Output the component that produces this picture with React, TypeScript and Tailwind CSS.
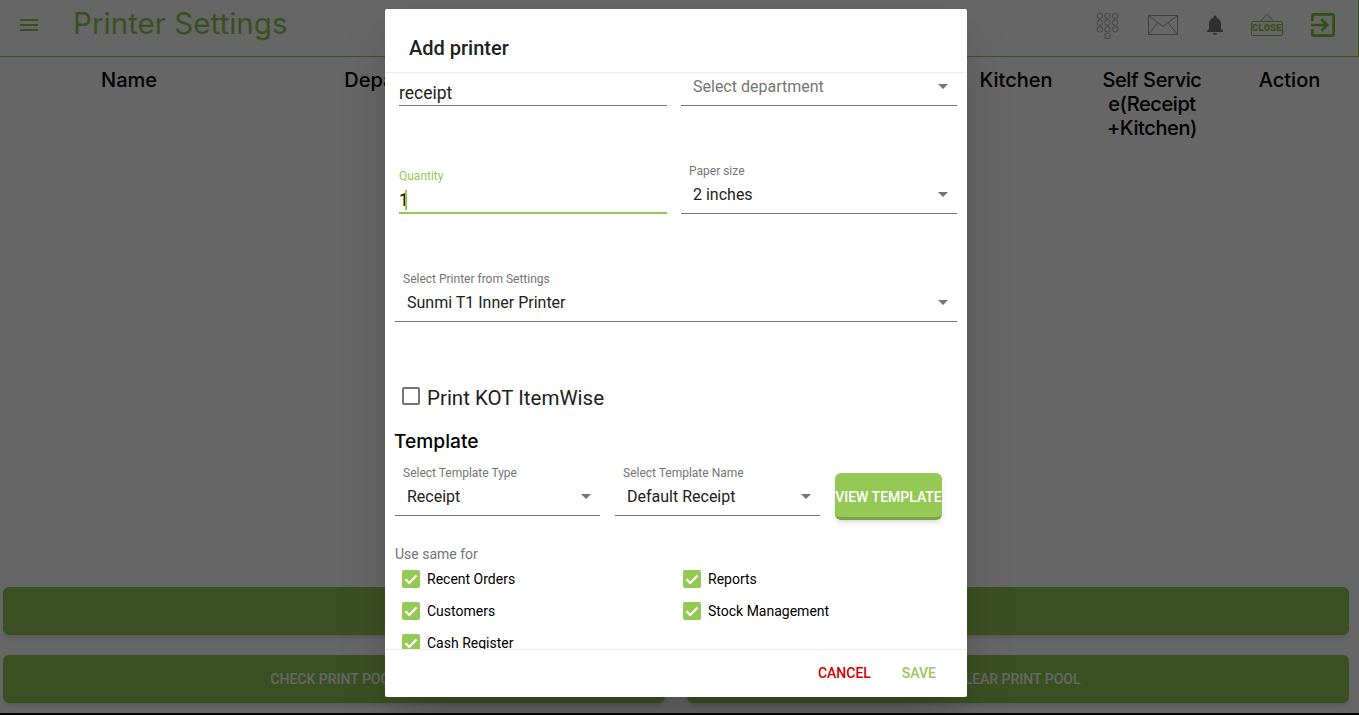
const LIME = "#94c955";

function SelectField({ label, value, placeholder, className }: { label?: string; value?: string; placeholder?: string; className?: string }) {
  return (
    <div className={`relative flex h-[49px] flex-col border-b border-[#757575] pl-2 ${className ?? ""}`}>
      <span className="-mt-[1px] h-[14px] text-[12px] leading-[14px] text-[#757575]">{label}</span>
      <span className={`mt-[7px] pl-1 text-[16px] leading-[20px] ${placeholder ? "text-[#757575]" : "text-[#212121]"}`}>
        {value ?? placeholder}
      </span>
      <span className="absolute top-[27px] right-[9px] h-0 w-0 border-x-[5px] border-t-[5px] border-x-transparent border-t-[#757575]" />
    </div>
  );
}

function CheckItem({ label }: { label: string }) {
  return (
    <div className="flex h-8 items-center gap-[7px]">
      <span className="flex h-[18px] w-[18px] items-center justify-center rounded-[2px] bg-[#94c955]">
        <svg viewBox="0 0 18 18" className="h-[18px] w-[18px]" fill="none" stroke="#fff" strokeWidth="2.2">
          <path d="M3.500 9.200l3.800 3.800 7.200-7.600" />
        </svg>
      </span>
      <span className="text-[14px] text-black">{label}</span>
    </div>
  );
}

function HeaderIcons() {
  return (
    <div className="mb-[6px] flex items-center">
      <svg viewBox="0 0 24 28" className="h-[27px] w-[23px]" fill="none" stroke="#a8a8a8" strokeWidth="1">
        {[4, 12, 20].flatMap((x) => [4, 11, 18].map((y) => <circle key={`${x}-${y}`} cx={x} cy={y} r="2.900" />))}
        <circle cx="12" cy="25" r="2.900" />
      </svg>
      <svg viewBox="0 0 30 20" className="ml-[29px] h-[20px] w-[30px]" fill="none" stroke="#a0a0a0" strokeWidth="1">
        <path d="M.5.5h29v19H.5zM.5.5l14.500 11L29.500.5M.5 19.500l9-11.500M29.500 19.500l-9-11.500" />
      </svg>
      <svg viewBox="0 0 24 24" className="ml-[25px] h-[24px] w-[24px]" fill="#757575">
        <path d="M12 22c1.100 0 2-.9 2-2h-4c0 1.100.9 2 2 2zm6-6v-5c0-3.070-1.630-5.640-4.500-6.320V4c0-.83-.67-1.500-1.500-1.500s-1.500.67-1.500 1.500v.68C7.640 5.360 6 7.920 6 11v5l-2 2v1h16v-1l-2-2z" />
      </svg>
      <div className="ml-[24px] flex h-[24px] w-[32px] flex-col items-center">
        <svg viewBox="0 0 14 8" className="h-[8px] w-[14px]" fill="none" stroke="#8cc04a" strokeWidth="1">
          <path d="M1 8l6-7 6 7" />
        </svg>
        <span className="flex h-[15px] w-[32px] items-center justify-center rounded-[2px] border border-[#8cc04a] font-['Liberation_Mono',monospace] text-[10px] leading-none font-bold text-[#8cc04a]">
          CLOSE
        </span>
      </div>
      <svg viewBox="3 3 18 18" className="ml-[28px] h-[24px] w-[24px]" fill="#7cc832">
        <path d="M10.090 15.590L11.500 17l5-5-5-5-1.410 1.410L12.670 11H3v2h9.670l-2.580 2.590zM19 3H5c-1.110 0-2 .9-2 2v4h2V5h14v14H5v-4H3v4c0 1.100.89 2 2 2h14c1.100 0 2-.9 2-2V5c0-1.100-.9-2-2-2z" />
      </svg>
    </div>
  );
}

function PrinterPage() {
  return (
    <div className="flex h-[713px] flex-col bg-white font-['Inter',sans-serif]">
      <header className="flex h-[57px] items-center border-r border-b border-r-[#94c955] border-b-[#94c955] pr-[23px]">
        <svg viewBox="0 0 24 24" className="mb-[6px] ml-[17px] h-[24px] w-[24px]" fill="#94c955">
          <path d="M3 18h18v-2H3v2zm0-5h18v-2H3v2zm0-7v2h18V6H3z" />
        </svg>
        <h1 className="mb-[10px] ml-[32px] flex-1 text-[29.6px] leading-[34px] font-normal text-[#94c955]">Printer Settings</h1>
        <HeaderIcons />
      </header>
      <div className="grid flex-1 grid-cols-[258px_286px_404px_136px_136px_139px] pt-[11px] text-center text-[20px] leading-[24px] font-medium text-black">
        <span>Name</span>
        <span>Department</span>
        <span />
        <span>Kitchen</span>
        <span className="whitespace-nowrap tracking-[-0.4px]">
          Self Servic
          <br />
          e(Receipt
          <br />
          +Kitchen)
        </span>
        <span>Action</span>
      </div>
      <div className="flex flex-col gap-5 pr-[10px] pb-[10px] pl-[3px] font-['Roboto',sans-serif] text-[14px] font-medium text-white">
        <button className="h-12 rounded-md bg-[#94c955] shadow-md" />
        <div className="flex gap-[22px]">
          <button className="flex h-12 flex-1 items-center justify-center rounded-md bg-[#94c955] shadow-md">CHECK PRINT POOL</button>
          <button className="flex h-12 flex-1 items-center justify-center rounded-md bg-[#94c955] shadow-md">CLEAR PRINT POOL</button>
        </div>
      </div>
    </div>
  );
}

function AddPrinterDialog() {
  return (
    <div className="absolute top-[9px] left-[385px] flex h-[688px] w-[582px] flex-col rounded-[2px] bg-white font-['Roboto',sans-serif] shadow-2xl">
      <div className="flex h-[64px] shrink-0 items-center border-b border-[#eeeeee] pt-[14px] pl-6 text-[20px] font-medium text-[#212121]">
        Add printer
      </div>
      <div className="flex-1 overflow-hidden">
        <div className="-mt-[75px] flex h-[108px] items-end gap-[14px] pr-[10px] pl-[14px]">
          <div className="flex h-[48px] w-[268px] flex-col justify-end border-b border-[#757575] text-[17.5px] leading-[24px] text-[#212121]">
            receipt
          </div>
          <SelectField placeholder="Select department" className="flex-1" />
        </div>
        <div className="flex h-[108px] items-end gap-[14px] pr-[10px] pl-[14px]">
          <div className="flex h-[48px] w-[268px] flex-col border-b-2 border-[#94c955]">
            <span className="mt-[3px] h-[14px] text-[12px] leading-[14px] text-[#94c955]">Quantity</span>
            <span className="mt-[6px] flex items-center text-[17.5px] leading-[22px] font-medium text-[#212121]">
              <span className="w-[6px]">1</span>
              <span className="h-[20px] w-[2px] bg-[#94c955]" />
            </span>
          </div>
          <SelectField label="Paper size" value="2 inches" className="flex-1" />
        </div>
        <div className="flex h-[108px] items-end pr-[10px] pl-[10px]">
          <SelectField label="Select Printer from Settings" value="Sunmi T1 Inner Printer" className="flex-1" />
        </div>
        <div className="mt-[58px] flex h-8 items-center gap-[7px] pl-[17px]">
          <span className="h-[18px] w-[18px] rounded-[2px] border-2 border-[#757575]" />
          <span className="mt-[3px] text-[20.5px] leading-[26px] text-[#212121]">Print KOT ItemWise</span>
        </div>
        <h2 className="mt-[15px] flex h-7 items-center pl-[9px] font-['Inter',sans-serif] text-[19.2px] font-medium text-black">Template</h2>
        <div className="mt-[11px] flex h-[50px] items-end gap-[15px] pl-[10px]">
          <SelectField label="Select Template Type" value="Receipt" className="w-[205px]" />
          <SelectField label="Select Template Name" value="Default Receipt" className="w-[205px]" />
          <button
            className="mb-[-4px] h-[47px] w-[107px] rounded-md border-b-[3px] border-[#7aa543] pt-[4px] text-[14px] font-medium whitespace-nowrap text-white shadow-md"
            style={{ backgroundColor: LIME }}
          >
            VIEW TEMPLATE
          </button>
        </div>
        <div className="mt-[28px] pl-[10px] text-[14px] leading-[20px] text-[#757575]">Use same for</div>
        <div className="-mt-[1px] grid grid-cols-[281px_1fr] pl-[17px]">
          <CheckItem label="Recent Orders" />
          <CheckItem label="Reports" />
          <CheckItem label="Customers" />
          <CheckItem label="Stock Management" />
          <CheckItem label="Cash Register" />
        </div>
      </div>
      <div className="flex h-[48px] shrink-0 items-center justify-end gap-[31px] border-t border-[#eeeeee] pr-[31px] text-[14px] font-medium">
        <button className="text-[#d50000]">CANCEL</button>
        <button className="text-[#94c955]">SAVE</button>
      </div>
    </div>
  );
}

export default function App() {
  return (
    <div className="relative h-[715px] w-full overflow-hidden bg-black">
      <PrinterPage />
      <div className="absolute inset-0 bg-black/60" />
      <AddPrinterDialog />
    </div>
  );
}
